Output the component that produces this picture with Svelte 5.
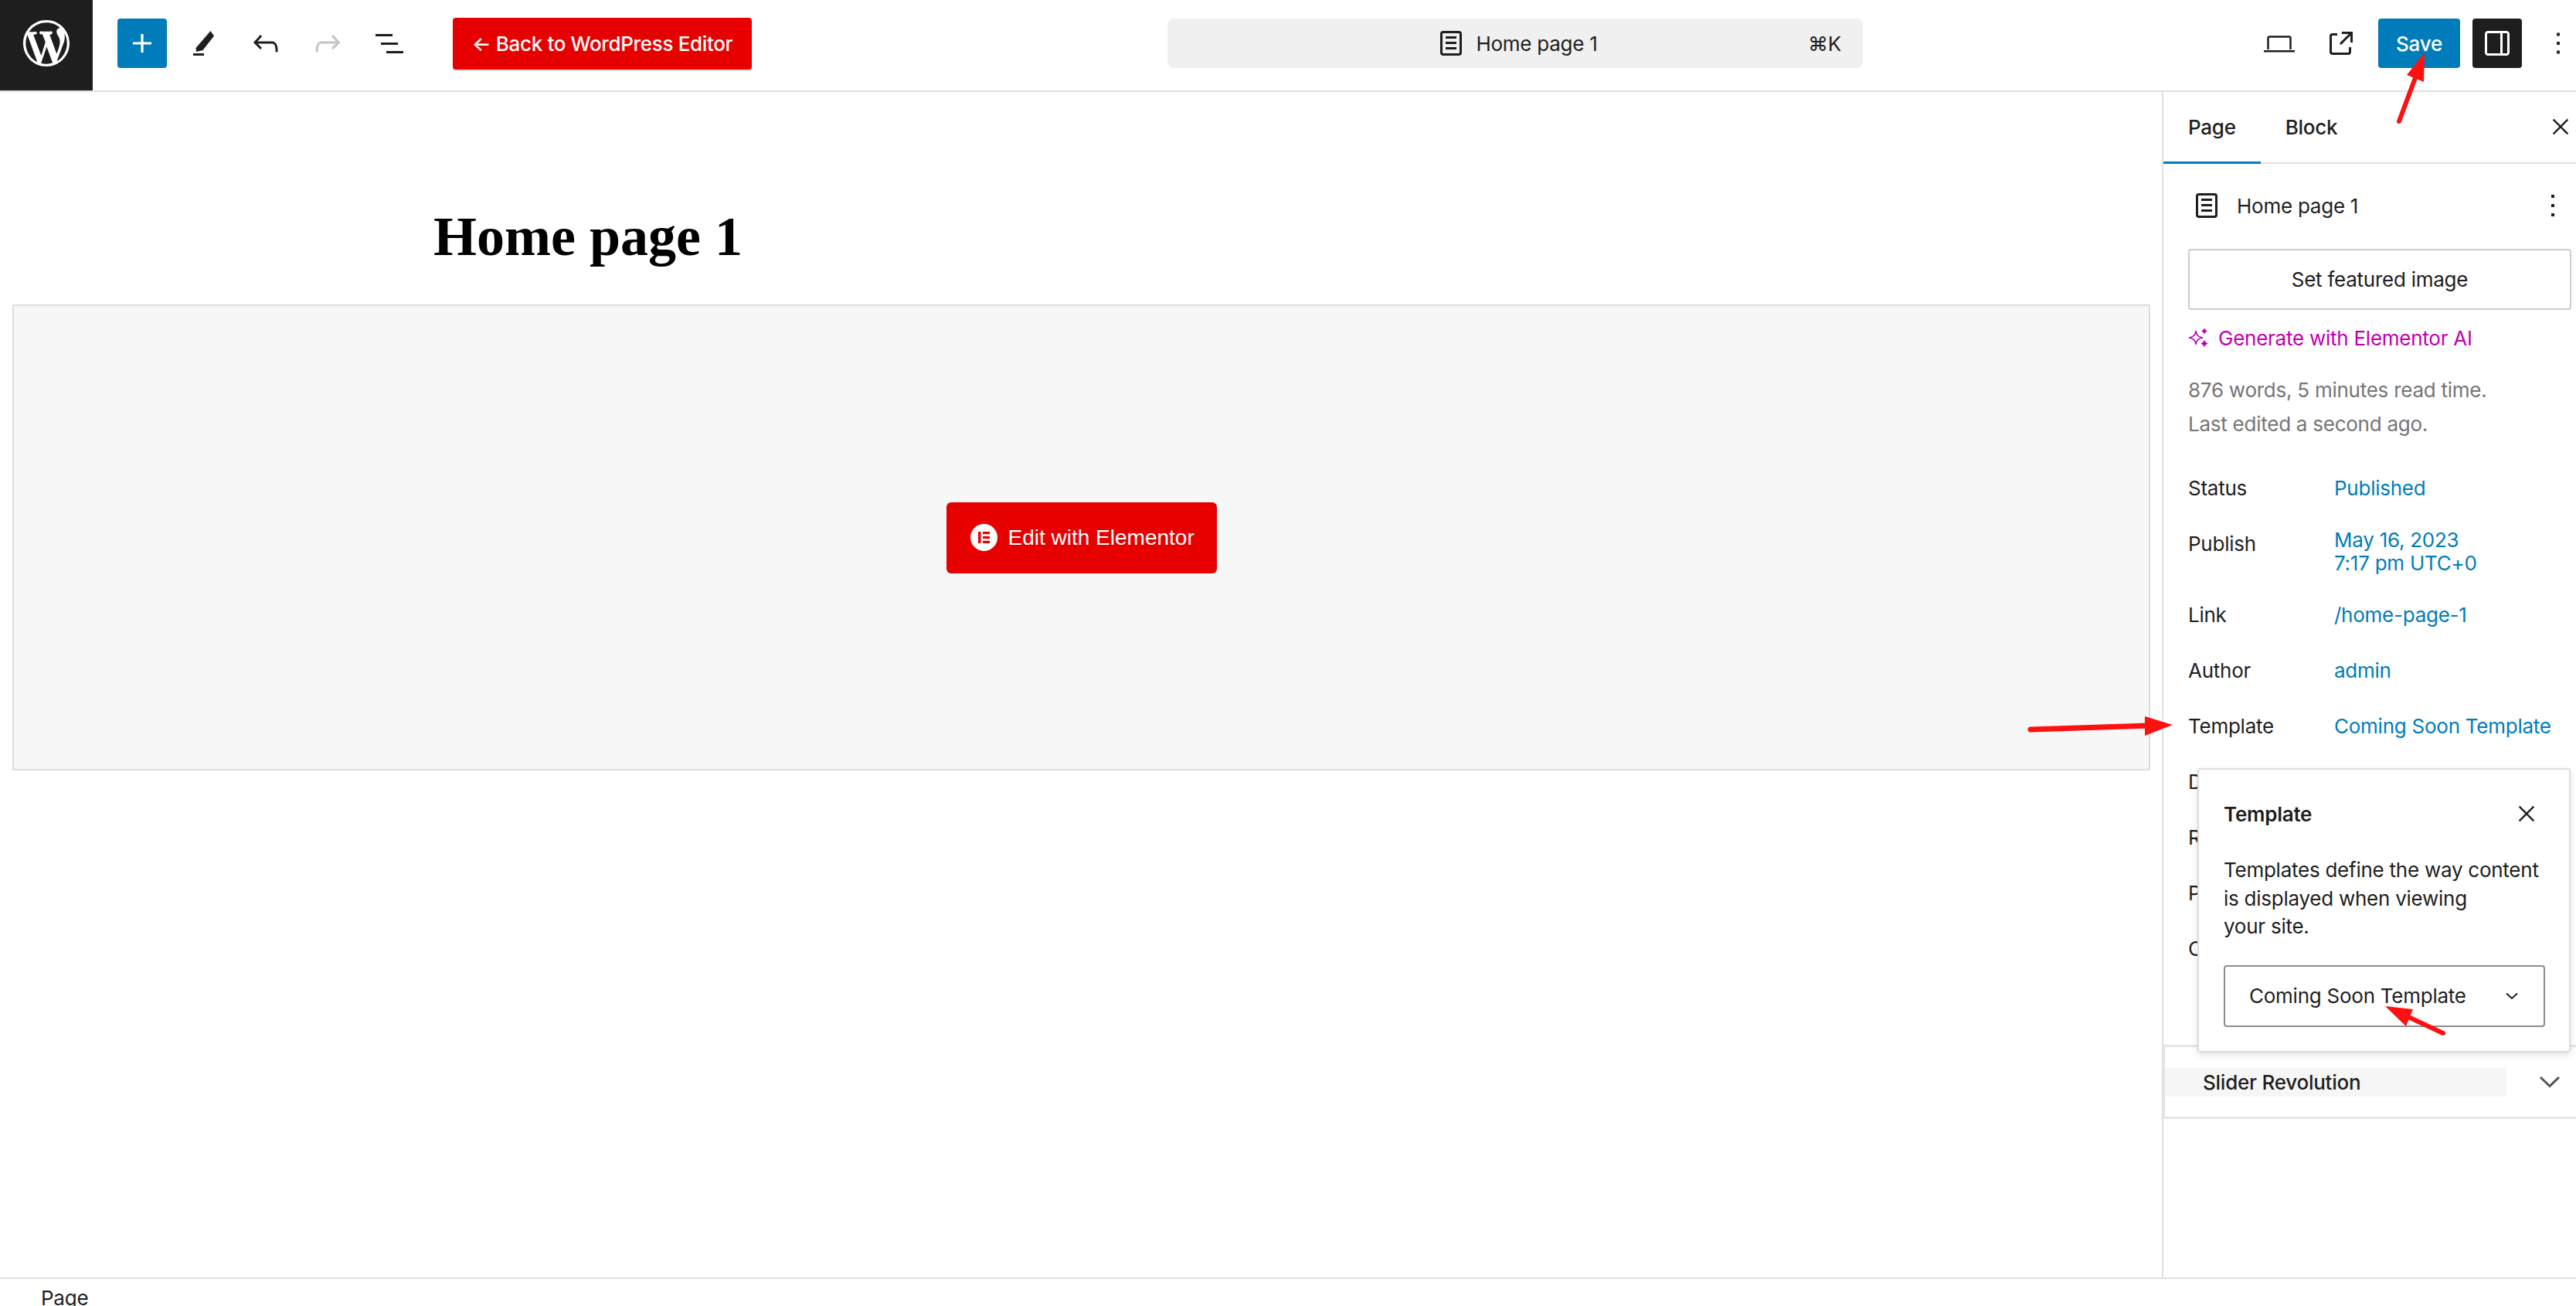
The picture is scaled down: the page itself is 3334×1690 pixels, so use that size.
<script>
  const rows = [
    { label: 'Status', value: 'Published' },
    { label: 'Publish', value: 'May 16, 2023', value2: '7:17 pm UTC+0' },
    { label: 'Link', value: '/home-page-1' },
    { label: 'Author', value: 'admin' },
    { label: 'Template', value: 'Coming Soon Template' },
    { label: 'Discussion', value: 'Open' },
    { label: 'Revisions', value: '3' },
    { label: 'Parent', value: 'None' },
    { label: 'Comments', value: 'Open' }
  ];
  const docOuter = 'M17 4H7a2 2 0 0 0-2 2v12a2 2 0 0 0 2 2h10a2 2 0 0 0 2-2V6a2 2 0 0 0-2-2ZM7 5.5h10a.5.5 0 0 1 .5.5v12a.5.5 0 0 1-.5.5H7a.5.5 0 0 1-.5-.5V6a.5.5 0 0 1 .5-.5Z';
  const docLines = 'M15.5 7.5h-7V9h7V7.5Zm-7 3.5h7v1.5h-7V11Zm7 3.5h-7V16h7v-1.5Z';
  const dots = 'M13 19h-2v-2h2v2zm0-6h-2v-2h2v2zm0-6h-2V5h2v2z';
</script>

<div class="app">
  <header class="topbar">
    <div class="logo">
      <svg viewBox="0 0 20 20" width="60" height="60"><path fill="#fff" d="M20 10c0-5.51-4.49-10-10-10C4.48 0 0 4.49 0 10c0 5.52 4.48 10 10 10 5.51 0 10-4.48 10-10zM7.78 15.37L4.37 6.22c.55-.02 1.17-.08 1.17-.08.5-.06.44-1.13-.06-1.11 0 0-1.45.11-2.37.11-.18 0-.37 0-.58-.01C4.12 2.69 6.87 1.11 10 1.11c2.33 0 4.45.87 6.05 2.34-.68-.11-1.65.39-1.65 1.58 0 .74.45 1.36.9 2.1.35.61.55 1.36.55 2.46 0 1.49-1.4 5-1.4 5l-3.03-8.37c.54-.02.82-.17.82-.17.5-.05.44-1.25-.06-1.22 0 0-1.44.12-2.38.12-.87 0-2.33-.12-2.33-.12-.5-.03-.56 1.2-.06 1.22l.92.08 1.26 3.41zM17.41 10c.24-.64.74-1.87.43-4.25.7 1.29 1.05 2.71 1.05 4.25 0 3.29-1.73 6.24-4.4 7.78.97-2.59 1.94-5.2 2.92-7.78zM6.1 18.09C3.12 16.65 1.11 13.53 1.11 10c0-1.3.23-2.48.72-3.59C3.25 10.3 4.67 14.2 6.1 18.09zm4.03-6.63l2.58 6.98c-.86.29-1.76.45-2.71.45-.79 0-1.57-.11-2.29-.33.81-2.38 1.62-4.74 2.42-7.1z"/></svg>
    </div>
    <div class="tools">
      <div class="tool add"><svg viewBox="0 0 24 24" width="48" height="48"><path fill="#fff" d="M18 11.2h-5.2V6h-1.6v5.2H6v1.6h5.2V18h1.6v-5.2H18z"/></svg></div>
      <div class="tool"><svg viewBox="0 0 48 48" width="48" height="48"><path fill="#1e1e1e" d="M32.5 8 37 14.5 22.5 33 14 35 13.500 30Z"/><rect x="10" y="37" width="14" height="3" fill="#1e1e1e"/></svg></div>
      <div class="tool"><svg viewBox="0 0 24 24" width="48" height="48"><path fill="#1e1e1e" d="M18.3 11.7c-.6-.6-1.400-.9-2.300-.9H6.700l2.900-3.300-1.100-1-4.500 5L8.500 16l1-1-2.700-2.700H16c.5 0 .9.2 1.300.5 1 1 1 3.400 1 4.500v.3h1.500v-.2c0-1.500 0-4.300-1.500-5.700z"/></svg></div>
      <div class="tool"><svg viewBox="0 0 24 24" width="48" height="48"><path fill="#c4c4c4" d="M15.600 6.500l-1.100 1 2.900 3.300H8c-.9 0-1.700.3-2.300.9-1.400 1.500-1.400 4.200-1.400 5.700v.2h1.500v-.3c0-1.100 0-3.500 1-4.500.3-.3.7-.5 1.300-.5h9.200L14.500 15l1.100 1.100 4.600-4.600-4.600-5z"/></svg></div>
      <div class="tool"><svg viewBox="0 0 24 24" width="48" height="48"><path fill="#1e1e1e" d="M3 6h11v1.500H3V6zm3.500 5.500h11V13h-11v-1.500zM21 17H10v1.500h11V17z"/></svg></div>
    </div>
    <div class="back">← Back to WordPress Editor</div>
    <div class="command">
      <div class="command-title">
        <svg viewBox="0 0 24 24" width="48" height="48"><path fill="#1e1e1e" d={docOuter}/><path fill="#1e1e1e" d={docLines}/></svg>
        <span>Home page 1</span>
      </div>
      <span class="shortcut">⌘K</span>
    </div>
    <div class="actions">
      <div class="act"><svg viewBox="0 0 48 48" width="48" height="48"><path fill="none" stroke="#1e1e1e" stroke-width="2.500" d="M9.500 32V17.500a2 2 0 0 1 2-2h25a2 2 0 0 1 2 2V32"/><rect x="4" y="33" width="40" height="2.500" fill="#1e1e1e"/></svg></div>
      <div class="act ext"><svg viewBox="0 0 24 24" width="48" height="48"><path fill="#1e1e1e" d="M19.500 4.500h-7V6h4.440l-5.970 5.970 1.060 1.060L18 7.060v4.440h1.500v-7Zm-13 1a2 2 0 0 0-2 2v10a2 2 0 0 0 2 2h10a2 2 0 0 0 2-2v-3H17v3a.5.5 0 0 1-.5.5h-10a.5.5 0 0 1-.5-.5v-10a.5.5 0 0 1 .5-.5h3V5.500h-3Z"/></svg></div>
      <div class="save">Save</div>
      <div class="toggle"><svg viewBox="0 0 24 24" width="48" height="48"><path fill="#fff" d="M18 4H6c-1.100 0-2 .9-2 2v12c0 1.100.9 2 2 2h12c1.100 0 2-.9 2-2V6c0-1.100-.9-2-2-2zm-4 14.500H6c-.3 0-.5-.2-.5-.5V6c0-.3.2-.5.5-.5h8v13zm4.500-.5c0 .3-.2.5-.5.5h-2.500v-13H18c.3 0 .5.2.5.5v12z"/></svg></div>
      <div class="more"><svg viewBox="0 0 24 24" width="48" height="48"><path fill="#1e1e1e" d={dots}/></svg></div>
    </div>
  </header>

  <div class="main">
    <section class="canvas">
      <div class="title-wrap"><h1>Home page 1</h1></div>
      <div class="placeholder">
        <div class="edit-btn">
          <svg viewBox="0 0 35 35" width="35" height="35">
            <circle cx="17.500" cy="17.500" r="17.500" fill="#fff"/>
            <g fill="#e60000"><rect x="10" y="10" width="3.500" height="15"/><rect x="16" y="10" width="9" height="3.200"/><rect x="16" y="15.900" width="9" height="3.200"/><rect x="16" y="21.800" width="9" height="3.200"/></g>
          </svg>
          <span>Edit with Elementor</span>
        </div>
      </div>
    </section>

    <aside class="sidebar">
      <div class="tabs">
        <div class="tab active">Page</div>
        <div class="tab">Block</div>
        <svg class="close" viewBox="0 0 24 24" width="32" height="32"><path d="M5 5 19 19M19 5 5 19" stroke="#1e1e1e" stroke-width="1.800" fill="none"/></svg>
      </div>
      <div class="summary">
        <div class="post-row">
          <svg viewBox="0 0 24 24" width="48" height="48"><path fill="#1e1e1e" d={docOuter}/><path fill="#1e1e1e" d={docLines}/></svg>
          <span>Home page 1</span>
          <svg class="post-dots" viewBox="0 0 24 24" width="48" height="48"><path fill="#1e1e1e" d={dots}/></svg>
        </div>
        <div class="featured">Set featured image</div>
        <div class="generate">
          <svg viewBox="0 0 26 26" width="26" height="26" fill="#c000b0">
            <path d="M10 4 Q10.800 12.200 19 13 Q10.800 13.800 10 22 Q9.200 13.800 1 13 Q9.200 12.200 10 4Z" fill="none" stroke="#c000b0" stroke-width="1.600"/>
            <path d="M21 0.500 22.500 3 25 4.500 22.500 6 21 8.500 19.500 6 17 4.500 19.500 3Z"/>
            <path d="M21 16 22.800 18.700 25.500 20.500 22.800 22.300 21 25 19.200 22.300 16.500 20.500 19.200 18.700Z"/>
          </svg>
          <span>Generate with Elementor AI</span>
        </div>
        <div class="meta">876 words, 5 minutes read time.<br>Last edited a second ago.</div>
        <div class="rows">
          {#each rows as row}
            <div class="row">
              <span class="label">{row.label}</span>
              {#if row.value2}
                <span class="value double">{row.value}<br>{row.value2}</span>
              {:else}
                <span class="value">{row.value}</span>
              {/if}
            </div>
          {/each}
        </div>
      </div>
      <div class="panel">
        <div class="panel-title"><span>Slider Revolution</span></div>
        <svg class="panel-chevron" viewBox="0 0 28 16" width="28" height="16"><path d="M2 2 14 13.500 26 2" fill="none" stroke="#555" stroke-width="3"/></svg>
      </div>

      <div class="popover">
        <div class="pop-head">
          <strong>Template</strong>
          <svg viewBox="0 0 24 24" width="32" height="32"><path d="M5 5 19 19M19 5 5 19" stroke="#1e1e1e" stroke-width="1.800" fill="none"/></svg>
        </div>
        <p>Templates define the way content<br>is displayed when viewing<br>your site.</p>
        <div class="select">
          <span>Coming Soon Template</span>
          <svg viewBox="0 0 18 10" width="18" height="10"><path d="M2 1.500 9 8 16 1.500" fill="none" stroke="#1e1e1e" stroke-width="2"/></svg>
        </div>
      </div>
    </aside>
  </div>

  <footer class="footer">Page</footer>

  <svg class="arrows" viewBox="0 0 3334 1690" width="3334" height="1690">
    <g fill="#ff1010" stroke="#ff1010" stroke-linecap="round">
      <line x1="3105" y1="157" x2="3127" y2="98" stroke-width="6"/>
      <path d="M3138 68 3115 97 3137 106Z" stroke="none"/>
      <line x1="2628" y1="944" x2="2780" y2="939" stroke-width="7"/>
      <path d="M2812 938 2776 927 2776 952Z" stroke="none"/>
      <line x1="3162" y1="1337" x2="3115" y2="1315" stroke-width="6"/>
      <path d="M3087 1302 3123 1306 3114 1328Z" stroke="none"/>
    </g>
  </svg>
</div>

<style>
  :global(body) { margin: 0; background: #fff; }
  .app {
    position: relative;
    width: 3334px;
    height: 1690px;
    overflow: hidden;
    display: flex;
    flex-direction: column;
    font-family: Inter, "Liberation Sans", sans-serif;
    font-size: 26px;
    letter-spacing: -0.25px;
    color: #1e1e1e;
  }
  .topbar {
    height: 119px;
    box-sizing: border-box;
    flex: none;
    display: flex;
    align-items: center;
    border-bottom: 2px solid #e0e0e0;
    padding-bottom: 5px;
    position: relative;
  }
  .logo {
    width: 120px;
    height: 117px;
    margin-bottom: -5px;
    padding-bottom: 5px;
    box-sizing: border-box;
    background: #1e1e1e;
    display: flex;
    align-items: center;
    justify-content: center;
    flex: none;
  }
  .tools { display: flex; gap: 16px; margin-left: 32px; }
  .tool { width: 64px; height: 64px; display: flex; align-items: center; justify-content: center; border-radius: 4px; }
  .add { background: #007cba; }
  .back {
    margin-left: 50px;
    width: 387px;
    height: 67px;
    background: #e60000;
    color: #fff;
    border-radius: 4px;
    display: flex;
    align-items: center;
    justify-content: center;
    font-weight: 500;
    box-shadow: 0 2px 0 #ddd;
    white-space: nowrap;
    letter-spacing: -0.35px;
  }
  .command {
    margin-left: 538px;
    width: 900px;
    height: 64px;
    background: #f0f0f0;
    border-radius: 8px;
    position: relative;
    display: flex;
    align-items: center;
    justify-content: center;
  }
  .command-title { display: flex; align-items: center; gap: 8px; }
  .shortcut { position: absolute; right: 28px; color: #1e1e1e; }
  .actions { display: flex; align-items: center; margin-left: auto; }
  .act { width: 64px; height: 64px; display: flex; align-items: center; justify-content: center; margin-right: 16px; }
  .ext { margin-right: 16px; }
  .save {
    width: 106px;
    height: 64px;
    background: #007cba;
    color: #fff;
    font-weight: 500;
    border-radius: 4px;
    display: flex;
    align-items: center;
    justify-content: center;
    margin-right: 16px;
  }
  .toggle {
    width: 64px;
    height: 64px;
    background: #1e1e1e;
    border-radius: 4px;
    display: flex;
    align-items: center;
    justify-content: center;
    margin-right: 24px;
  }
  .more { width: 46px; display: flex; justify-content: flex-start; height: 48px; margin-left: 0; }
  .main { flex: 1; display: flex; min-height: 0; }
  .canvas { flex: 1; padding: 0 15px 0 16px; min-width: 0; }
  .title-wrap { height: 275px; padding-left: 545px; box-sizing: border-box; }
  h1 {
    margin: 0;
    padding-top: 151px;
    font-family: "Liberation Serif", serif;
    font-size: 72px;
    line-height: 72px;
    font-weight: 700;
    letter-spacing: 0;
    color: #000;
  }
  .placeholder {
    height: 603px;
    box-sizing: border-box;
    border: 2px solid #ddd;
    background: #f7f7f7;
    display: flex;
    align-items: center;
    justify-content: center;
  }
  .edit-btn {
    width: 350px;
    height: 92px;
    background: #e60000;
    border-radius: 6px;
    color: #fff;
    display: flex;
    align-items: center;
    gap: 14px;
    box-sizing: border-box;
    padding-left: 31px;
    font-family: "Liberation Sans", sans-serif;
    font-size: 28px;
    letter-spacing: 0;
  }
  .sidebar {
    width: 534px;
    flex: none;
    border-left: 2px solid #e0e0e0;
    position: relative;
  }
  .tabs {
    height: 91px;
    border-bottom: 2px solid #e0e0e0;
    display: flex;
    position: relative;
    align-items: stretch;
  }
  .tab {
    padding: 0 32px;
    display: flex;
    align-items: center;
    font-weight: 500;
    color: #1e1e1e;
    margin-bottom: -2px;
    padding-bottom: 2px;
  }
  .tab.active { box-shadow: inset 0 -3px 0 #007cba; }
  .close { position: absolute; right: 4px; top: 29px; }
  .summary { height: 1140px; padding-left: 32px; box-sizing: border-box; }
  .post-row {
    height: 108px;
    display: flex;
    align-items: center;
    position: relative;
  }
  .post-row span { margin-left: 15px; }
  .post-dots { position: absolute; right: 6px; top: 30px; }
  .featured {
    width: 496px;
    height: 79px;
    box-sizing: border-box;
    border: 2px solid #ccc;
    border-radius: 4px;
    display: flex;
    align-items: center;
    justify-content: center;
    margin-top: 2px;
  }
  .generate {
    display: flex;
    align-items: center;
    gap: 13px;
    color: #c000b0;
    margin-top: 20px;
    height: 32px;
  }
  .meta { color: #757575; line-height: 44px; margin-top: 30px; }
  .rows { margin-top: 25px; }
  .row {
    display: grid;
    grid-template-columns: 189px 1fr;
    min-height: 72px;
    align-items: start;
  }
  .label, .value { line-height: 36px; margin-top: 18px; white-space: nowrap; }
  .value { color: #007cba; }
  .value.double { line-height: 30px; margin-top: 16px; margin-bottom: 16px; }
  .panel {
    border: solid #e6e6e6;
    border-width: 3px 0 3px 2px;
    box-sizing: content-box;
    position: relative;
    padding-top: 27px;
    height: 63px;
  }
  .panel-title {
    width: 442px;
    height: 37px;
    background: #f6f6f6;
    display: flex;
    align-items: center;
    padding-left: 49px;
    box-sizing: border-box;
    font-weight: 500;
  }
  .panel-chevron { position: absolute; right: 20px; top: 37px; }
  .popover {
    position: absolute;
    left: 44px;
    top: 875px;
    width: 483px;
    height: 368px;
    box-sizing: border-box;
    background: #fff;
    border: 2px solid #ddd;
    border-radius: 4px;
    box-shadow: 0 3px 8px rgba(0, 0, 0, 0.12);
    padding: 0 32px;
  }
  .pop-head {
    display: flex;
    justify-content: space-between;
    align-items: center;
    height: 112px;
    padding-top: 2px;
    box-sizing: border-box;
  }
  .pop-head strong { font-weight: 600; }
  .pop-head svg { margin-right: 7px; }
  p { margin: 0; line-height: 36.500px; white-space: nowrap; }
  .select {
    margin-top: 31px;
    width: 416px;
    height: 80px;
    box-sizing: border-box;
    border: 2px solid #8c8c8c;
    border-radius: 4px;
    display: flex;
    align-items: center;
    justify-content: space-between;
    padding: 0 32px 0 31px;
  }
  .footer {
    height: 37px;
    flex: none;
    box-sizing: border-box;
    border-top: 2px solid #e0e0e0;
    padding-left: 53px;
    line-height: 50px;
    overflow: hidden;
  }
  .arrows { position: absolute; left: 0; top: 0; pointer-events: none; }
</style>
